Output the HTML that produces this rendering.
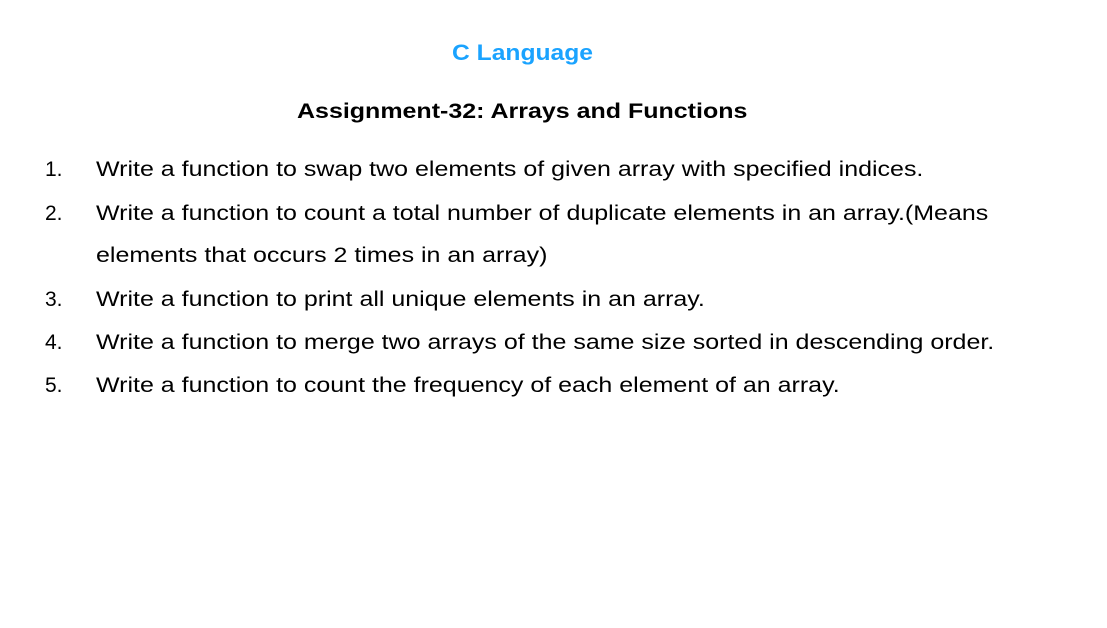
<!DOCTYPE html>
<html><head><style>
body{margin:0;width:1107px;height:628px;background:#fff;font-family:"Liberation Sans",sans-serif;position:relative;overflow:hidden}
.t{position:absolute;font-weight:bold;white-space:nowrap;transform-origin:left top}
.l{position:absolute;font-size:21px;color:#000;white-space:nowrap;line-height:24px;transform-origin:left top}
.s{transform:scaleX(1.19)}
</style></head><body>
<div class="t" style="left:452px;top:40px;font-size:22px;color:#1aa3ff;transform:scaleX(1.12)">C Language</div>
<div class="t" style="left:297px;top:100px;font-size:21px;color:#000;transform:scaleX(1.19)">Assignment-32: Arrays and Functions</div>
<div class="l" style="left:45px;top:158px">1.</div><div class="l s" style="left:96px;top:158px">Write a function to swap two elements of given array with specified indices.</div>
<div class="l" style="left:45px;top:202px">2.</div><div class="l s" style="left:96px;top:202px">Write a function to count a total number of duplicate elements in an array.(Means</div>
<div class="l s" style="left:96px;top:244px">elements that occurs 2 times in an array)</div>
<div class="l" style="left:45px;top:288px">3.</div><div class="l s" style="left:96px;top:288px">Write a function to print all unique elements in an array.</div>
<div class="l" style="left:45px;top:331px">4.</div><div class="l s" style="left:96px;top:331px">Write a function to merge two arrays of the same size sorted in descending order.</div>
<div class="l" style="left:45px;top:374px">5.</div><div class="l s" style="left:96px;top:374px">Write a function to count the frequency of each element of an array.</div>
</body></html>
